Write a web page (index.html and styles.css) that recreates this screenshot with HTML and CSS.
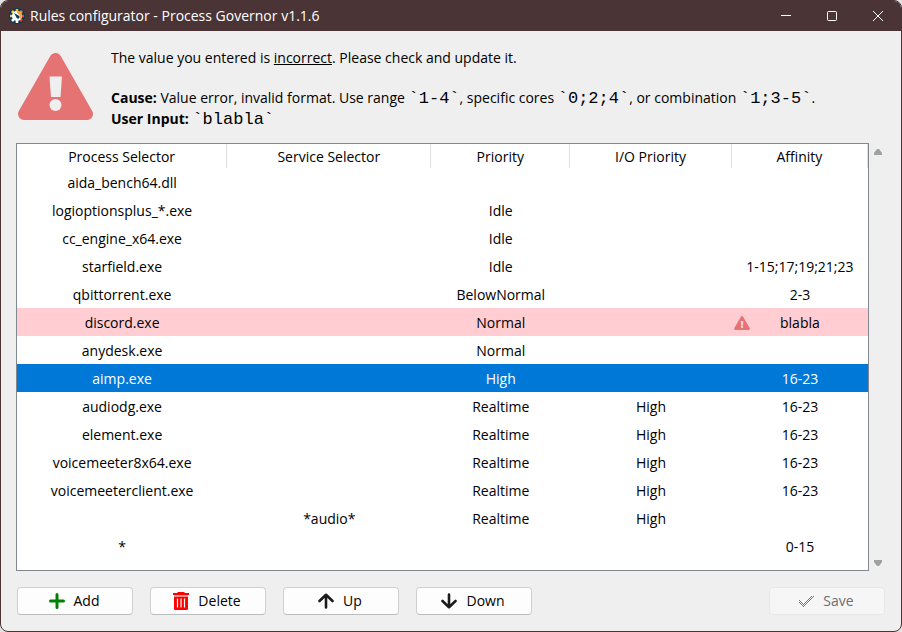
FILE: index.html
```html
<!DOCTYPE html>
<html lang="en">
<head>
<meta charset="utf-8">
<title>Rules configurator - Process Governor v1.1.6</title>
<link rel="stylesheet" href="styles.css">
</head>
<body>
<div class="window">
  <header class="titlebar">
    <svg class="app-icon" viewBox="0 0 16 16" aria-hidden="true">
      <circle cx="8" cy="8" r="8" fill="#0b3a52"/>
      <g stroke-width="2.600">
        <path d="M8 8V1" stroke="#ffb81a"/>
        <path d="M8 8L13 3" stroke="#f58a1f"/>
        <path d="M8 8H15" stroke="#f0492a"/>
        <path d="M8 8L13 13" stroke="#e8402c"/>
        <path d="M8 8V15" stroke="#fff"/>
        <path d="M8 8L3 13" stroke="#fff"/>
        <path d="M8 8H1" stroke="#b8e08c"/>
        <path d="M8 8L3 3" stroke="#f4e034"/>
      </g>
      <circle cx="8" cy="8" r="5" fill="#fff"/>
      <path d="M8 3A5 5 0 0 1 13 8L11.500 11.500L11 8L8 4.500Z" fill="#f9a03a"/>
      <path d="M5 5L9.500 7.500A1.600 1.600 0 1 1 7.500 9.500Z" fill="#0b3a52"/>
    </svg>
    <h1 class="title">Rules configurator - Process Governor v1.1.6</h1>
    <div class="caption-buttons">
      <button type="button" class="caption" aria-label="Minimize"><svg viewBox="0 0 12 12"><path d="M1 5.500H11"/></svg></button>
      <button type="button" class="caption" aria-label="Maximize"><svg viewBox="0 0 12 12"><rect x="1.500" y="1.500" width="9" height="9" rx="1"/></svg></button>
      <button type="button" class="caption" aria-label="Close"><svg viewBox="0 0 12 12"><path d="M1 1L11 11M11 1L1 11"/></svg></button>
    </div>
  </header>

  <main class="content">
    <section class="message" role="alert">
      <svg class="message-icon" viewBox="0 0 75 67" aria-hidden="true">
        <path d="M37.500 6L69 61H6Z" fill="#e57373" stroke="#e57373" stroke-width="12" stroke-linejoin="round"/>
        <path d="M31.500 23.500H44L42.500 44H33Z" fill="#efefef"/>
        <circle cx="37.500" cy="52" r="6" fill="#efefef"/>
      </svg>
      <div class="message-text">
        <p class="summary">The value you entered is <u>incorrect</u>. Please check and update it.</p>
        <p><b>Cause:</b> Value error, invalid format. Use range <code>`1-4`</code>, specific cores <code>`0;2;4`</code>, or combination <code>`1;3-5`</code>.</p>
        <p><b>User Input:</b> <code>`blabla`</code></p>
      </div>
    </section>

    <section class="list">
      <div class="list-box">
        <table class="rules">
          <colgroup><col class="c-process"><col class="c-service"><col class="c-priority"><col class="c-io"><col class="c-affinity"></colgroup>
          <thead>
            <tr><th>Process Selector</th><th>Service Selector</th><th>Priority</th><th>I/O Priority</th><th>Affinity</th></tr>
          </thead>
          <tbody>
            <tr><td>aida_bench64.dll</td><td></td><td></td><td></td><td></td></tr>
            <tr><td>logioptionsplus_*.exe</td><td></td><td>Idle</td><td></td><td></td></tr>
            <tr><td>cc_engine_x64.exe</td><td></td><td>Idle</td><td></td><td></td></tr>
            <tr><td>starfield.exe</td><td></td><td>Idle</td><td></td><td>1-15;17;19;21;23</td></tr>
            <tr><td>qbittorrent.exe</td><td></td><td>BelowNormal</td><td></td><td>2-3</td></tr>
            <tr class="invalid"><td>discord.exe</td><td></td><td>Normal</td><td></td><td>
              <div class="flagged">
                <svg viewBox="0 0 75 67" aria-hidden="true"><path d="M37.500 6L69 61H6Z" fill="#e57373" stroke="#e57373" stroke-width="12" stroke-linejoin="round"/><path d="M31.500 23.500H44L42.500 44H33Z" fill="#ffcdd2"/><circle cx="37.500" cy="52" r="6" fill="#ffcdd2"/></svg>
                <span>blabla</span>
              </div></td></tr>
            <tr><td>anydesk.exe</td><td></td><td>Normal</td><td></td><td></td></tr>
            <tr class="selected"><td>aimp.exe</td><td></td><td>High</td><td></td><td>16-23</td></tr>
            <tr><td>audiodg.exe</td><td></td><td>Realtime</td><td>High</td><td>16-23</td></tr>
            <tr><td>element.exe</td><td></td><td>Realtime</td><td>High</td><td>16-23</td></tr>
            <tr><td>voicemeeter8x64.exe</td><td></td><td>Realtime</td><td>High</td><td>16-23</td></tr>
            <tr><td>voicemeeterclient.exe</td><td></td><td>Realtime</td><td>High</td><td>16-23</td></tr>
            <tr><td></td><td>*audio*</td><td>Realtime</td><td>High</td><td></td></tr>
            <tr><td>*</td><td></td><td></td><td></td><td>0-15</td></tr>
          </tbody>
        </table>
      </div>
      <div class="scrollbar" aria-hidden="true">
        <svg viewBox="0 0 8 6"><path d="M3 0H5L8 4V6H0V4Z"/></svg>
        <svg viewBox="0 0 8 6"><path d="M0 0H8V2L5 6H3L0 2Z"/></svg>
      </div>
    </section>

    <footer class="actions">
      <button type="button" class="action"><svg viewBox="0 0 16 16"><path d="M8 1.500V14.500M1.500 8H14.500" stroke="#008000" stroke-width="3" stroke-linecap="round"/></svg>Add</button>
      <button type="button" class="action"><svg class="trash" viewBox="0 0 16 18"><path d="M5 0H11L12 1H16V3H0V1H4Z" fill="#f00"/><path d="M1 4.500H15V16.500Q15 18 13.500 18H2.500Q1 18 1 16.500Z" fill="#f00"/><path d="M1 3H15V4.500H1Z" fill="#ff9a9a"/><path d="M4.500 6.500V15.500M8 6.500V15.500M11.500 6.500V15.500" stroke="#fff" stroke-width="1.200"/></svg>Delete</button>
      <button type="button" class="action"><svg viewBox="0 0 16 16"><path d="M8 14.500V2M1.500 8L8 1.800L14.500 8" stroke="#1c1c1c" stroke-width="2.600" stroke-linecap="round" stroke-linejoin="round"/></svg>Up</button>
      <button type="button" class="action"><svg viewBox="0 0 16 16"><path d="M8 1.500V14M1.500 8L8 14.200L14.500 8" stroke="#1c1c1c" stroke-width="2.600" stroke-linecap="round" stroke-linejoin="round"/></svg>Down</button>
      <button type="button" class="action save" disabled><svg viewBox="0 0 16 16" shape-rendering="crispEdges"><defs><pattern id="dots" width="2" height="2" patternUnits="userSpaceOnUse"><path d="M0 0H1V1H0ZM1 1H2V2H1Z" fill="#3f80e4"/></pattern></defs><path d="M1 8L6 12.500L15 3" stroke="url(#dots)" stroke-width="3"/></svg>Save</button>
    </footer>
  </main>
</div>
</body>
</html>
```
FILE: styles.css
```css
* { box-sizing: border-box; }

body {
  margin: 0;
  background: #e4e2e2;
  color: #000;
  font: 14px/20px "Open Sans", "Noto Sans", sans-serif;
}

button { font: inherit; color: inherit; }

.window {
  display: flex;
  flex-direction: column;
  min-height: 100vh;
  border: 1px solid #4a3435;
  border-radius: 8px;
  background: #efefef;
  overflow: hidden;
}

.titlebar {
  display: flex;
  align-items: center;
  height: 30px;
  padding-left: 8px;
  background: #4a3435;
  color: #fff;
}

.app-icon { width: 16px; height: 16px; margin-right: 5px; }

.title { flex: 1; margin: 0; font-size: 14px; font-weight: 400; }

.caption-buttons { display: flex; }

.caption {
  display: flex;
  align-items: center;
  justify-content: center;
  width: 46px;
  height: 30px;
  padding: 0;
  border: 0;
  background: none;
}

.caption svg { width: 12px; height: 12px; fill: none; stroke: #fff; }

.content {
  flex: 1;
  display: flex;
  flex-direction: column;
  padding: 16px 16px 16px 15px;
}

.message { display: flex; gap: 18px; padding-left: 2px; margin-bottom: 14px; }
.message-icon { flex: none; width: 75px; height: 67px; margin-top: 6px; }
.message-text p { margin: 0; line-height: 21px; }
.message-text .summary { margin-bottom: 19px; }
.message code { font: 17px/16px "Liberation Mono", monospace; }

.list { flex: 1; display: flex; }

.list-box {
  flex: 1;
  border: 1px solid #828790;
  background: #fff;
}

.rules { width: 100%; table-layout: fixed; border-collapse: separate; border-spacing: 0; }
.c-process { width: 24.7%; }
.c-service { width: 24%; }
.c-priority { width: 16.3%; }
.c-io { width: 19%; }
.c-affinity { width: 16%; }

.rules th, .rules td { padding: 2px 0 0; text-align: center; font-weight: 400; white-space: nowrap; }
.rules th { height: 24px; border-right: 1px solid #e0e0e0; }
.rules td { height: 28px; }
.invalid { background: #ffcdd2; }
.selected { background: #0078d7; color: #fff; }

.flagged { display: grid; grid-template-columns: 16px 1fr 16px; align-items: center; padding: 0 2px; }
.flagged svg { width: 16px; height: 14px; }

.scrollbar {
  display: flex;
  flex-direction: column;
  justify-content: space-between;
  width: 16px;
  padding: 6px 0 5px 5px;
}

.scrollbar svg { width: 8px; height: 6px; fill: #a0a0a0; }

.actions { display: flex; gap: 17px; margin-top: 16px; padding-left: 1px; }

.action {
  display: flex;
  align-items: center;
  justify-content: center;
  gap: 9px;
  width: 116px;
  height: 28px;
  padding: 0 2px 0 0;
  border: 1px solid #d0d0d0;
  border-bottom-color: #bcbcbc;
  border-radius: 4px;
  background: #fdfdfd;
}

.action svg { width: 16px; height: 16px; fill: none; }
.action .trash { height: 18px; }

.save {
  margin-left: auto;
  border-color: #e7e7e7;
  background: #f6f6f6;
  color: #6e6e6e;
}
```
